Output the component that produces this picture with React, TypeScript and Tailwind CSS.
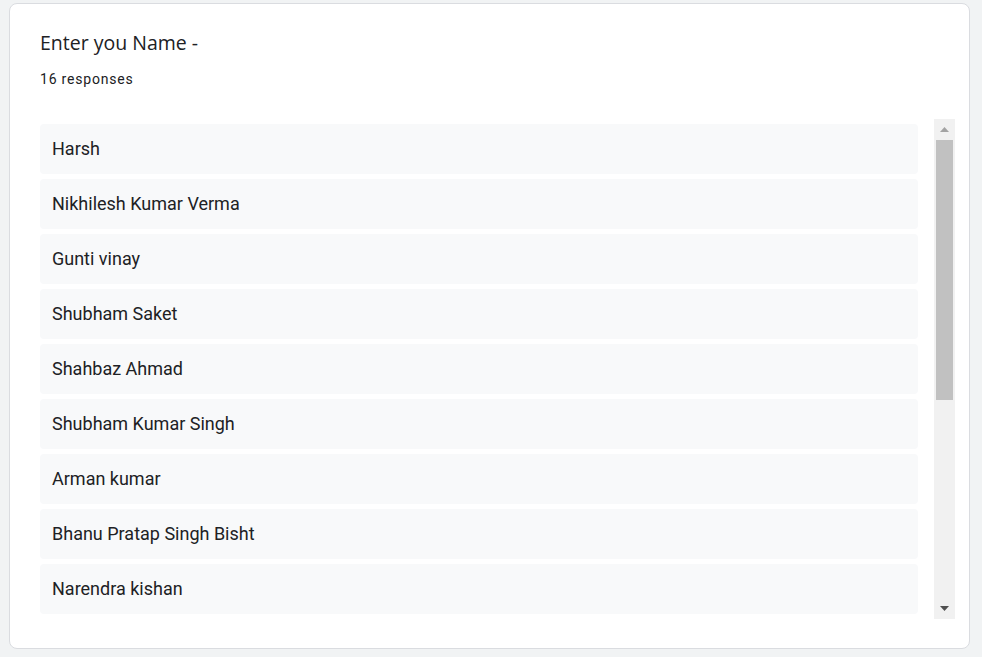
const names = [
  "Harsh",
  "Nikhilesh Kumar Verma",
  "Gunti vinay",
  "Shubham Saket",
  "Shahbaz Ahmad",
  "Shubham Kumar Singh",
  "Arman kumar",
  "Bhanu Pratap Singh Bisht",
  "Narendra kishan",
];

const Scrollbar = () => (
  <div className="flex w-[21px] shrink-0 flex-col bg-[#f1f1f1]">
    <div className="flex h-[21px] items-center justify-center">
      <svg width="9" height="5" viewBox="0 0 9 5">
        <path d="M0 5 L4.5 0 L9 5 Z" fill="#a3a3a3" />
      </svg>
    </div>
    <div className="mx-auto h-[260px] w-[17px] bg-[#c1c1c1]" />
    <div className="flex-1" />
    <div className="flex h-[21px] items-center justify-center">
      <svg width="9" height="5" viewBox="0 0 9 5">
        <path d="M0 0 L9 0 L4.5 5 Z" fill="#505050" />
      </svg>
    </div>
  </div>
);

export default function App() {
  return (
    <div className="min-h-[657px] bg-[#f1f3f4] pl-[9px] pr-[12px] pt-[3px] font-['Roboto',sans-serif]">
      <div className="h-[646px] rounded-lg border border-[#dadce0] bg-white pl-[30px] pr-[14px] pt-[25px]">
        <h2 className="text-[19.5px] leading-[28px] text-[#202124] font-['Open_Sans',sans-serif]">
          Enter you Name -
        </h2>
        <p className="mt-[12px] text-[14px] leading-5 tracking-[0.8px] text-[#202124]">16 responses</p>
        <div className="mt-[30px] flex h-[500px]">
          <div className="flex-1 overflow-hidden pr-[16px] pt-[5px]">
            <ul className="flex flex-col gap-[5px]">
              {names.map((n) => (
                <li
                  key={n}
                  className="flex h-[50px] items-center rounded bg-[#f8f9fa] px-3 pb-[2px] text-[18px] text-[#202124]"
                >
                  {n}
                </li>
              ))}
            </ul>
          </div>
          <Scrollbar />
        </div>
      </div>
    </div>
  );
}
